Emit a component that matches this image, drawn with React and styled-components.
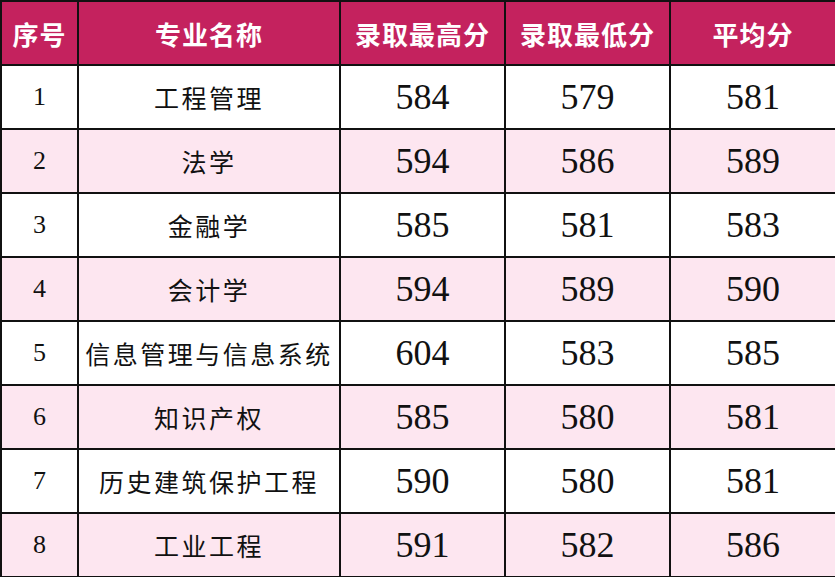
import React from "react";
import styled, { createGlobalStyle } from "styled-components";

const GlobalStyle = createGlobalStyle`
  html, body {
    margin: 0;
    padding: 0;
    background: #fff;
  }
`;

const rows = [
  { no: 1, name: "工程管理", high: 584, low: 579, avg: 581 },
  { no: 2, name: "法学", high: 594, low: 586, avg: 589 },
  { no: 3, name: "金融学", high: 585, low: 581, avg: 583 },
  { no: 4, name: "会计学", high: 594, low: 589, avg: 590 },
  { no: 5, name: "信息管理与信息系统", high: 604, low: 583, avg: 585 },
  { no: 6, name: "知识产权", high: 585, low: 580, avg: 581 },
  { no: 7, name: "历史建筑保护工程", high: 590, low: 580, avg: 581 },
  { no: 8, name: "工业工程", high: 591, low: 582, avg: 586 },
];

function App() {
  return (
    <>
      <GlobalStyle />
      <Table>
        <colgroup>
          <col style={{ width: 77 }} />
          <col style={{ width: 262 }} />
          <col style={{ width: 165 }} />
          <col style={{ width: 165 }} />
          <col style={{ width: 166 }} />
        </colgroup>
        <thead>
          <tr>
            <HeadCell>序号</HeadCell>
            <HeadCell>专业名称</HeadCell>
            <HeadCell>录取最高分</HeadCell>
            <HeadCell>录取最低分</HeadCell>
            <HeadCell>平均分</HeadCell>
          </tr>
        </thead>
        <tbody>
          {rows.map((r) => (
            <Row key={r.no} $pink={r.no % 2 === 0}>
              <NoCell>{r.no}</NoCell>
              <NameCell>{r.name}</NameCell>
              <ScoreCell>{r.high}</ScoreCell>
              <ScoreCell>{r.low}</ScoreCell>
              <ScoreCell>{r.avg}</ScoreCell>
            </Row>
          ))}
        </tbody>
      </Table>
    </>
  );
}

export default App;

const Table = styled.table`
  width: 835px;
  border-collapse: collapse;
  table-layout: fixed;
`;

const HeadCell = styled.th`
  height: 62px;
  padding: 0;
  border: 2px solid #111;
  background: #c4225e;
  color: #fff;
  font-family: "Noto Sans CJK SC", sans-serif;
  font-weight: 700;
  font-size: 26px;
  letter-spacing: 1px;
  text-align: center;
  vertical-align: middle;
  white-space: nowrap;
`;

const Row = styled.tr`
  background: ${(p) => (p.$pink ? "#fde6f0" : "#fff")};
`;

const Cell = styled.td`
  height: 62px;
  padding: 0;
  border: 2px solid #111;
  text-align: center;
  vertical-align: middle;
  color: #111;
  white-space: nowrap;
`;

const NoCell = styled(Cell)`
  font-family: "Liberation Serif", serif;
  font-size: 26px;
`;

const NameCell = styled(Cell)`
  font-family: "Noto Sans CJK SC", sans-serif;
  font-size: 25px;
  letter-spacing: 2.5px;
`;

const ScoreCell = styled(Cell)`
  font-family: "Liberation Serif", serif;
  font-size: 36px;
`;
